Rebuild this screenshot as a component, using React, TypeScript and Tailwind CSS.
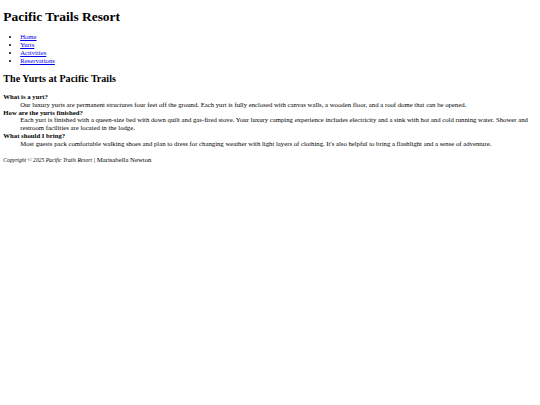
const NAV = ['Home', 'Yurts', 'Activities', 'Reservations']

const FAQ = [
  {
    q: 'What is a yurt?',
    a: 'Our luxury yurts are permanent structures four feet off the ground. Each yurt is fully enclosed with canvas walls, a wooden floor, and a roof dome that can be opened.',
  },
  {
    q: 'How are the yurts finished?',
    a: 'Each yurt is finished with a queen-size bed with down quilt and gas-fired stove. Your luxury camping experience includes electricity and a sink with hot and cold running water. Shower and restroom facilities are located in the lodge.',
  },
  {
    q: 'What should I bring?',
    a: "Most guests pack comfortable walking shoes and plan to dress for changing weather with light layers of clothing. It's also helpful to bring a flashlight and a sense of adventure.",
  },
]

export default function App() {
  return (
    <div className="min-h-[405px] bg-white px-[3.36px] pt-[9px] text-[6.72px] leading-[1.15] text-black font-['Liberation_Serif','Times_New_Roman',serif]">
      <h1 className="text-[13.44px] font-bold leading-[1.15]">Pacific Trails Resort</h1>

      <nav>
        <ul className="my-[9px] list-disc pl-[16.8px]">
          {NAV.map(item => (
            <li key={item}>
              <a href="#" className="text-[#0000ee] underline">{item}</a>
            </li>
          ))}
        </ul>
      </nav>

      <main>
        <h2 className="mt-[8.4px] text-[10.08px] font-bold leading-[1.15]">The Yurts at Pacific Trails</h2>
        <dl className="my-[8.4px]">
          {FAQ.map(f => (
            <div key={f.q}>
              <dt className="font-bold">{f.q}</dt>
              <dd className="ml-[16.8px]">{f.a}</dd>
            </div>
          ))}
        </dl>
      </main>

      <footer>
        <small className="text-[5.6px] italic">Copyright © 2025 Pacific Trails Resort</small> | Marisabella Newton
      </footer>
    </div>
  )
}
